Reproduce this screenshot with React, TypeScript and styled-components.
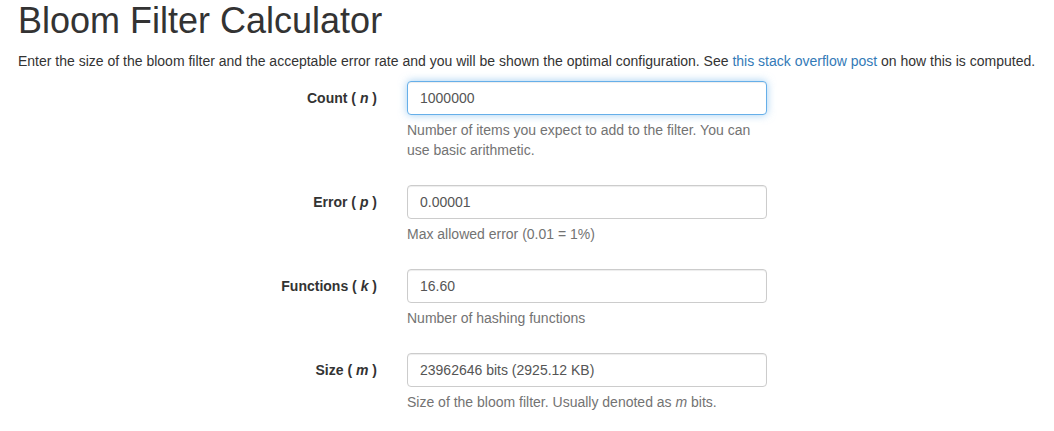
import React from "react";
import styled, { createGlobalStyle, css } from "styled-components";

const Global = createGlobalStyle`
  html, body { margin: 0; padding: 0; background: #fff; }
  body {
    font-family: "Liberation Sans", Arial, Helvetica, sans-serif;
    font-size: 14px;
    line-height: 20px;
    color: #333;
  }
  * { box-sizing: border-box; }
`;

const Page = styled.div`
  padding: 0 18px;
`;

const Title = styled.h1`
  font-family: "Liberation Sans", Arial, sans-serif;
  font-size: 36px;
  font-weight: 500;
  line-height: 1.1;
  margin: 1px 0 10px;
  color: #333;
`;

const Intro = styled.p`
  margin: 0 0 10px;
  white-space: nowrap;
`;

const Link = styled.a`
  color: #337ab7;
  text-decoration: none;
`;

const Form = styled.form`
  display: flex;
  flex-direction: column;
`;

const Group = styled.div`
  display: flex;
  gap: 30px;
  margin-bottom: 15px;
`;

const Label = styled.label`
  width: 359px;
  flex: none;
  text-align: right;
  padding-top: 7px;
  font-weight: 700;
  line-height: 20px;
  i { font-style: italic; }
`;

const Field = styled.div`
  width: 360px;
  flex: none;
`;

const Input = styled.input<{ $active?: boolean }>`
  display: block;
  width: 100%;
  height: 34px;
  padding: 6px 12px;
  font-family: "Liberation Sans", Arial, sans-serif;
  font-size: 14px;
  line-height: 20px;
  color: #555;
  background: #fff;
  border: 1px solid #ccc;
  border-radius: 4px;
  box-shadow: inset 0 1px 1px rgba(0, 0, 0, 0.075);
  outline: none;
  ${(p) =>
    p.$active &&
    css`
      border-color: #66afe9;
      box-shadow: inset 0 1px 1px rgba(0, 0, 0, 0.075),
        0 0 8px rgba(102, 175, 233, 0.6);
    `}
`;

const Help = styled.span`
  display: block;
  margin: 5px 0 10px;
  color: #737373;
  line-height: 20px;
`;

const rows = [
  {
    name: "Count",
    sym: "n",
    value: "1000000",
    active: true,
    help: <>Number of items you expect to add to the filter. You can use basic arithmetic.</>,
  },
  {
    name: "Error",
    sym: "p",
    value: "0.00001",
    help: <>Max allowed error (0.01 = 1%)</>,
  },
  {
    name: "Functions",
    sym: "k",
    value: "16.60",
    help: <>Number of hashing functions</>,
  },
  {
    name: "Size",
    sym: "m",
    value: "23962646 bits (2925.12 KB)",
    help: (
      <>
        Size of the bloom filter. Usually denoted as <i>m</i> bits.
      </>
    ),
  },
];

export default function App() {
  return (
    <Page>
      <Global />
      <Title>Bloom Filter Calculator</Title>
      <Intro>
        Enter the size of the bloom filter and the acceptable error rate and you will be shown the
        optimal configuration. See <Link href="#">this stack overflow post</Link> on how this is
        computed.
      </Intro>
      <Form onSubmit={(e) => e.preventDefault()}>
        {rows.map((r) => (
          <Group key={r.name}>
            <Label>
              {r.name} ( <i>{r.sym}</i> )
            </Label>
            <Field>
              <Input $active={r.active} defaultValue={r.value} readOnly />
              <Help>{r.help}</Help>
            </Field>
          </Group>
        ))}
      </Form>
    </Page>
  );
}
